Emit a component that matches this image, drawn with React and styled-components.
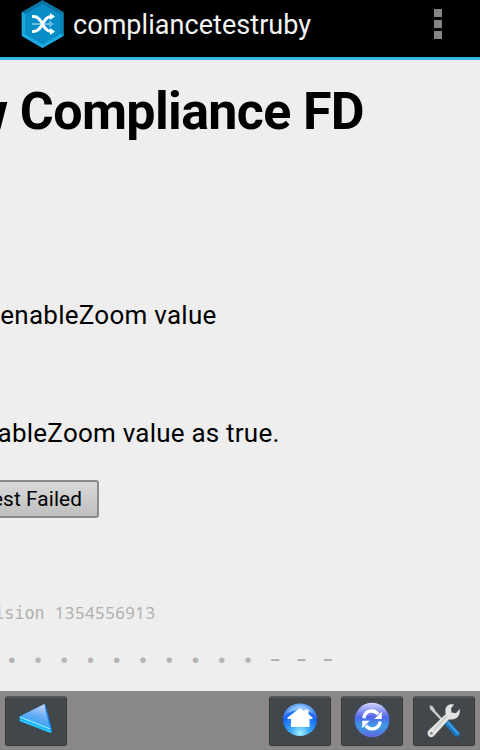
import React from 'react';
import styled, { createGlobalStyle } from 'styled-components';

const Global = createGlobalStyle`
  * { box-sizing: border-box; }
  body { margin: 0; overflow: hidden; background: #eee; font-family: Roboto, sans-serif; }
`;
const Screen = styled.div`
  width: 480px; height: 750px; display: flex; flex-direction: column; overflow: hidden; background: #eee;
`;
const TitleBar = styled.header`
  flex: none; height: 60px; background: #000; border-bottom: 3px solid #33b5e5;
  display: flex; align-items: flex-start; padding: 0 38px 0 21px;
`;
const AppTitle = styled.div`
  margin-left: 9px; height: 50px; line-height: 50px; color: #f3f3f3; font-size: 27px;
  letter-spacing: 0.05px; flex: 1; white-space: nowrap;
`;
const Overflow = styled.div`
  display: flex; flex-direction: column; gap: 3px; margin-top: 9px;
`;
const Square = styled.i`
  width: 8px; height: 8px; background: #848484;
`;
const Content = styled.main`
  flex: none; height: 631px; overflow: hidden; display: flex; flex-direction: column; align-items: flex-start;
`;
const Line = styled.div`
  flex: none; display: flex; justify-content: flex-end; white-space: pre; color: ${p => p.$color || '#000'};
  width: ${p => p.$right}px; margin-top: ${p => p.$top || 0}px; height: ${p => p.$height}px;
  line-height: ${p => p.$height}px; font-size: ${p => p.$size}px; letter-spacing: ${p => p.$spacing || 0}px;
`;
const Heading = styled(Line).attrs({ as: 'h1' })`
  font-weight: 700; margin-bottom: 0;
`;
const MonoLine = styled(Line)`
  font-family: "DejaVu Sans Mono", monospace;
`;
const Digits = styled.span`
  font-family: "Noto Sans", sans-serif; font-size: 16.8px; letter-spacing: 0.47px;
`;
const TestButton = styled.button`
  flex: none; width: 130px; height: 38px; padding: 0 15px 0 0; text-align: right;
  border: 2px solid #8b8b8b; border-radius: 3px; background: linear-gradient(#dadada, #bebebe);
  font: 400 20.8px/33px Roboto, sans-serif; letter-spacing: 0.1px; color: #000;
`;
const Marks = styled.div`
  display: grid; grid-template-columns: repeat(13, 26.27px); margin: 23px 0 0 -1.5px; height: 24px;
  line-height: 24px; font-family: "Liberation Sans", sans-serif; font-size: 20px; color: #b5b5b5; text-align: center;
`;
const Dash = styled.span`
  font-size: 16px; font-weight: 700; line-height: 24px; padding-left: 2px; color: #aaa;
`;
const Toolbar = styled.nav`
  flex: none; height: 59px; background: #888; display: flex; align-items: flex-start; gap: 10px; padding: 5px 5px 0;
`;
const Tool = styled.button`
  width: 62px; height: 50px; padding: 0 0 3px; border: 1px solid #34393c; border-top: 2px solid #51575b;
  border-radius: 3px; background: #41474b; display: flex; align-items: center; justify-content: center;
  margin-right: ${p => (p.$push ? 'auto' : 0)};
  svg { display: block; flex: none; }
`;

const Logo = () => (
  <svg width="43" height="48" viewBox="0 0 43 48">
    <path d="M21.5 0 42.5 12V36L21.5 48 .8 36V12Z" fill="#0874a4" />
    <path d="M.8 12 4.5 14V34L21.5 44 39 34 42.5 32V36L21.5 48 .8 36Z" fill="#1ba9df" />
    <path d="M39 14 42.5 12V36L39 33Z" fill="#0c83b5" />
    <path d="M21.5 4 39 14V34L21.5 44 4.5 34V14Z" fill="#098dc7" />
    <path d="M11 24H29" stroke="#69bde0" strokeWidth="2" />
    <path d="M28 20.5 33 24 28 27.5Z" fill="#69bde0" />
    <path d="M11 16.5h2c9 0 8 15 17 15M11 31.5h2c9 0 8-15 17-15" fill="none" stroke="#fff" strokeWidth="2.8" />
    <path d="M29 13 34 16.5 29 20ZM29 28 34 31.5 29 35Z" fill="#fff" />
  </svg>
);
const BackIcon = () => (
  <svg width="36" height="34" viewBox="0 0 36 34">
    <defs>
      <linearGradient id="back" x1=".8" y1="0" x2=".4" y2="1">
        <stop stopColor="#d0d7ff" /><stop offset=".5" stopColor="#65adf5" /><stop offset="1" stopColor="#259cf8" />
      </linearGradient>
    </defs>
    <path d="M26.5 1 34 27 33 30 1.5 18V13.5Z" fill="#159cf5" />
    <path d="M26.5 1 32.5 25.5 1.5 13.5Z" fill="url(#back)" />
    <path d="M2 14.2 32.5 26.2" stroke="#83edff" strokeWidth="1.3" />
    <path d="M2 17 33 29" stroke="#28c6ff" strokeWidth="2.2" />
    <path d="M27 2 33.3 27" stroke="#147de8" strokeWidth="1.2" />
  </svg>
);
const HomeIcon = () => (
  <svg width="36" height="34" viewBox="0 0 36 34">
    <defs>
      <radialGradient id="home" cx=".5" cy=".92" r=".85">
        <stop stopColor="#a2f4ff" /><stop offset=".35" stopColor="#38a7ff" /><stop offset=".75" stopColor="#1662f1" /><stop offset="1" stopColor="#68aaff" />
      </radialGradient>
    </defs>
    <ellipse cx="18" cy="16.7" rx="17" ry="16.2" fill="url(#home)" />
    <path d="M5 10Q18-5 31 10Q18 4 5 10Z" fill="#bde8ff" opacity=".55" />
    <path d="M18 5 22.5 8V6.5H26.5V11L30.5 14.5V16H27.5V24H9V16H5.5V14.5Z" fill="#fff" />
  </svg>
);
const RefreshIcon = () => (
  <svg width="36" height="36" viewBox="0 0 36 36">
    <defs>
      <linearGradient id="refresh" x1="0" y1="0" x2="0" y2="1">
        <stop stopColor="#d3d5ff" /><stop offset=".25" stopColor="#8791f2" /><stop offset=".42" stopColor="#5265eb" /><stop offset=".68" stopColor="#3b9be6" /><stop offset="1" stopColor="#6265e0" />
      </linearGradient>
    </defs>
    <ellipse cx="18" cy="18" rx="17.3" ry="17.3" fill="url(#refresh)" />
    <path d="M9.8 16.2C11 8.3 20 6.8 24.2 12.2M26.2 19.5C25 27.7 16 29 11.8 23.6" fill="none" stroke="#fff" strokeWidth="3.4" />
    <path d="M27.8 9.8V17H20.2ZM8.2 26.3V18.8H15.8Z" fill="#fff" />
  </svg>
);
const ToolsIcon = () => (
  <svg width="36" height="36" viewBox="0 0 36 36">
    <path d="M3.5 3 7 4.5 9.5 9 19 19.5 17.5 21 7.5 10.5 4 7Z" fill="#c8cbcc" />
    <path d="m18.5 22 4-4L34 31.5 32.5 34.5 29.5 34.5Z" fill="#1878c4" />
    <path d="m21.5 20 11 12" stroke="#49a5e5" strokeWidth="1.8" />
    <path d="M28 2.5C22 1 18 5 19.8 12L2 29Q.8 32 3 34.5Q6 36.5 8.8 33L23 17.2C31 18.5 34.5 13 33.7 7L30 11.2 25.5 10.5 25 6.5Z" fill="#e3e3e2" />
    <path d="m8 28 13-14" stroke="#c5c7c7" strokeWidth="1.3" />
    <circle cx="5.4" cy="31.2" r="1.3" fill="#777c7e" />
  </svg>
);

export default function App() {
  return (
    <>
      <Global />
      <Screen>
        <TitleBar>
          <Logo />
          <AppTitle>compliancetestruby</AppTitle>
          <Overflow><Square /><Square /><Square /></Overflow>
        </TitleBar>
        <Content>
          <Heading $right={364} $height={60} $top={22} $size={52} $spacing={-0.65}>w Compliance FD</Heading>
          <Line $right={216.5} $height={36} $top={155} $size={26} $spacing={0.25}>enableZoom value</Line>
          <Line $right={2.5} $height={36} $top={23} $size={26} $color="#dedede">:</Line>
          <Line $right={279.5} $height={36} $top={23} $size={26} $spacing={0.22}>enableZoom value as true.</Line>
          <Line $right={99} $height={38} $top={29} $size={21}><TestButton>Test Failed</TestButton></Line>
          <MonoLine $right={155.5} $height={24} $top={83} $size={16.8} $color="#b0b0b0">Revision <Digits>1354556913</Digits></MonoLine>
          <Marks>{Array.from({ length: 13 }, (_, i) => i < 10 ? <span key={i}>•</span> : <Dash key={i}>–</Dash>)}</Marks>
        </Content>
        <Toolbar>
          <Tool $push aria-label="Back"><BackIcon /></Tool>
          <Tool aria-label="Home"><HomeIcon /></Tool>
          <Tool aria-label="Refresh"><RefreshIcon /></Tool>
          <Tool aria-label="Settings"><ToolsIcon /></Tool>
        </Toolbar>
      </Screen>
    </>
  );
}
